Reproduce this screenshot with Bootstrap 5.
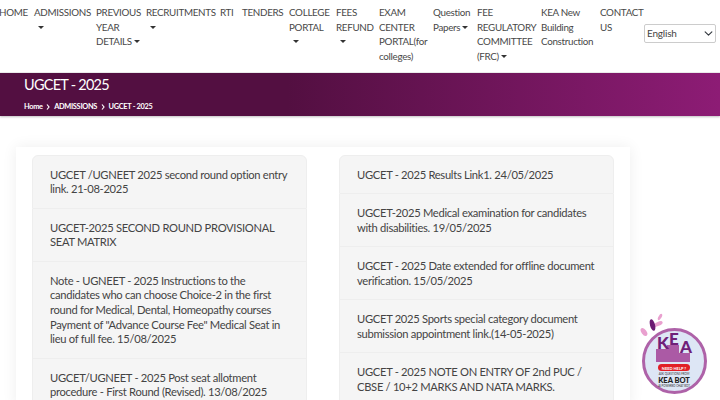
<!DOCTYPE html>
<html lang="en">
<head>
<meta charset="utf-8">
<title>UGCET - 2025</title>
<link href="https://cdn.jsdelivr.net/npm/bootstrap@5.3.0/dist/css/bootstrap.min.css" rel="stylesheet">
<style>
html,body{height:400px;overflow:hidden}
body{font-family:Lato,"Liberation Sans",sans-serif;background:#fff;color:#333}
.topbar{height:73px;padding:5px 4px 0 0;background:#fff;border-bottom:1px solid #eee}
.menu{list-style:none;margin:0 0 0 -1px;padding:0;gap:9px}
.menu li{font-size:9.8px;letter-spacing:-.3px;line-height:14.7px;color:#484848;flex:none}
.menu li:nth-child(1){width:26px}
.menu li:nth-child(2){width:53px}
.menu li:nth-child(3){width:41px}
.menu li:nth-child(4){width:65px}
.menu li:nth-child(5){width:13px}
.menu li:nth-child(6){width:38px}
.menu li:nth-child(7){width:38px}
.menu li:nth-child(8){width:34px}
.menu li:nth-child(9){width:45px}
.menu li:nth-child(10){width:35px}
.menu li:nth-child(11){width:55px}
.menu li:nth-child(12){width:50px}
.menu li:nth-child(13){width:41px}
.caret{display:inline-block;vertical-align:2px;margin-left:2px;border-top:3.5px solid #333;border-left:3px solid transparent;border-right:3px solid transparent}
.caret-row{display:block;padding-left:2px;line-height:14.7px}
.keep{white-space:nowrap}
.langbox{width:72px;height:19px;margin:19px 0 0 auto;padding:0 0 0 2px;font-size:10px;letter-spacing:-.2px;line-height:17px;color:#444;border:1px solid #ccc;border-radius:2px;background-position:right 2px center;background-size:9px 9px;min-height:0}
.langbox:focus{box-shadow:none}
.banner{height:43px;padding:3px 0 0 24px;background:linear-gradient(90deg,#530f41 0,#530f41 40%,#8d1c75 100%);color:#fff;box-shadow:0 1px 2px rgba(0,0,0,.25)}
.banner-title{font-size:14.5px;letter-spacing:-.75px;line-height:17px;margin:0;font-weight:400}
.crumbs{font-size:7.4px;letter-spacing:-.3px;line-height:10px;margin-top:9px;font-weight:700;gap:3.7px}
.sheet{margin:31px 90px 0 16px;padding:8px 16px 0;height:260px;background:#fff;box-shadow:0 0 14px rgba(0,0,0,.07);gap:32px}
.sheet>div{flex:1 1 0;min-width:0}
.feed .list-group-item{background:#f5f5f5;border-color:#eeeeee;padding:11.5px 17px 11.1px;font-size:11.2px;letter-spacing:-.3px;line-height:14.7px;color:#444}
.botwrap{position:absolute;left:636px;top:312px;width:74px;height:84px}
</style>
</head>
<body>
<nav class="topbar d-flex">
<ul class="menu d-flex">
<li>HOME</li>
<li>ADMISSIONS<span class="caret-row"><span class="caret"></span></span></li>
<li>PREVIOUS YEAR <span class="keep">DETAILS<span class="caret"></span></span></li>
<li>RECRUITMENTS<span class="caret-row"><span class="caret"></span></span></li>
<li>RTI</li>
<li>TENDERS</li>
<li>COLLEGE PORTAL<span class="caret-row"><span class="caret"></span></span></li>
<li>FEES REFUND<span class="caret-row"><span class="caret"></span></span></li>
<li>EXAM CENTER PORTAL(for colleges)</li>
<li>Question <span class="keep">Papers<span class="caret"></span></span></li>
<li>FEE REGULATORY COMMITTEE <span class="keep">(FRC)<span class="caret"></span></span></li>
<li>KEA New Building Construction</li>
<li>CONTACT US</li>
</ul>
<select class="form-select langbox" aria-label="Language"><option>English</option></select>
</nav>
<header class="banner">
<h1 class="banner-title">UGCET - 2025</h1>
<div class="crumbs d-flex align-items-center"><span>Home</span><svg width="4" height="6" viewBox="0 0 4 6"><path d="M1 .5 3 3 1 5.5" fill="none" stroke="#fff" stroke-width="1.2"/></svg><span>ADMISSIONS</span><svg width="4" height="6" viewBox="0 0 4 6"><path d="M1 .5 3 3 1 5.5" fill="none" stroke="#fff" stroke-width="1.2"/></svg><span>UGCET - 2025</span></div>
</header>
<main class="sheet d-flex">
<div class="feed list-group">
<div class="list-group-item">UGCET /UGNEET 2025 second round option entry link. 21-08-2025</div>
<div class="list-group-item">UGCET-2025 SECOND ROUND PROVISIONAL SEAT MATRIX</div>
<div class="list-group-item">Note - UGNEET - 2025 Instructions to the candidates who can choose Choice-2 in the first round for Medical, Dental, Homeopathy courses Payment of "Advance Course Fee" Medical Seat in lieu of full fee. 15/08/2025</div>
<div class="list-group-item">UGCET/UGNEET - 2025 Post seat allotment procedure - First Round (Revised). 13/08/2025</div>
</div>
<div class="feed list-group">
<div class="list-group-item">UGCET - 2025 Results Link1. 24/05/2025</div>
<div class="list-group-item">UGCET-2025 Medical examination for candidates with disabilities. 19/05/2025</div>
<div class="list-group-item">UGCET - 2025 Date extended for offline document verification. 15/05/2025</div>
<div class="list-group-item">UGCET 2025 Sports special category document submission appointment link.(14-05-2025)</div>
<div class="list-group-item">UGCET - 2025 NOTE ON ENTRY OF 2nd PUC / CBSE / 10+2 MARKS AND NATA MARKS.</div>
</div>
</main>
<div class="botwrap">
<svg width="74" height="84" viewBox="0 0 74 84" role="img" aria-label="KEA Bot">
<g fill="#e9a0cf"><ellipse cx="8" cy="20" rx="2.5" ry="4.5" transform="rotate(-35 8 20)"/><ellipse cx="24" cy="5" rx="1.5" ry="3.5" transform="rotate(30 24 5)"/><ellipse cx="22" cy="12" rx="5" ry="2" transform="rotate(-25 22 12)"/></g>
<ellipse cx="16.5" cy="13" rx="2.5" ry="6" transform="rotate(-15 16.5 13)" fill="#6b1a73"/>
<ellipse cx="38.5" cy="49" rx="31" ry="31.5" fill="#dde6f5" stroke="#ae62a8" stroke-width="3"/>
<path d="M20 37h11v-4h12v8h11v9H20z" fill="#ab5aa5"/>
<text x="21" y="37" font-family="Lato,sans-serif" font-weight="900" font-size="17" fill="#6f2079">K</text>
<text x="33" y="33" font-family="Lato,sans-serif" font-weight="900" font-size="17" fill="#6f2079">E</text>
<text x="44" y="41" font-family="Lato,sans-serif" font-weight="900" font-size="17" fill="#6f2079">A</text>
<rect x="22" y="52" width="32" height="7" rx="3.5" fill="#e11f26"/>
<text x="38" y="57.5" text-anchor="middle" font-family="Lato,sans-serif" font-weight="700" font-size="4" fill="#fff">NEED HELP ?</text>
<text x="38" y="63" text-anchor="middle" font-family="Lato,sans-serif" font-size="2.8" fill="#333">ASK QUESTIONS FROM</text>
<text x="38" y="70.5" text-anchor="middle" font-family="Lato,sans-serif" font-weight="900" font-size="7.5" fill="#222">KEA BOT</text>
<text x="38" y="75" text-anchor="middle" font-family="Lato,sans-serif" font-size="2.8" fill="#333">AI POWERED CHAT BOT</text>
</svg>
</div>
<script src="https://cdn.jsdelivr.net/npm/bootstrap@5.3.0/dist/js/bootstrap.bundle.min.js"></script>
</body>
</html>
